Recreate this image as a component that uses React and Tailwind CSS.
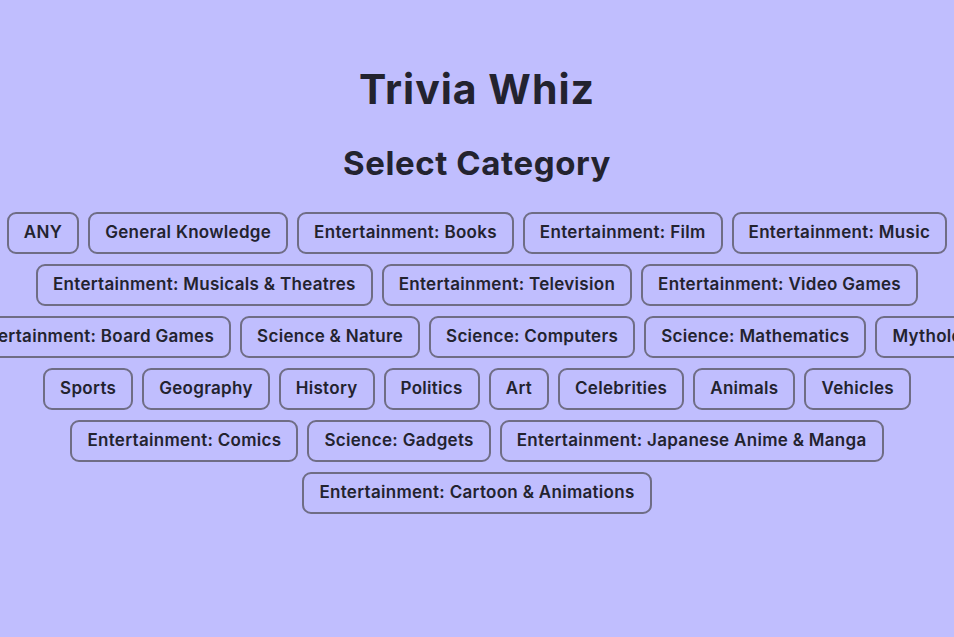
const categories = [
  "ANY",
  "General Knowledge",
  "Entertainment: Books",
  "Entertainment: Film",
  "Entertainment: Music",
  "Entertainment: Musicals & Theatres",
  "Entertainment: Television",
  "Entertainment: Video Games",
  "Entertainment: Board Games",
  "Science & Nature",
  "Science: Computers",
  "Science: Mathematics",
  "Mythology",
  "Sports",
  "Geography",
  "History",
  "Politics",
  "Art",
  "Celebrities",
  "Animals",
  "Vehicles",
  "Entertainment: Comics",
  "Science: Gadgets",
  "Entertainment: Japanese Anime & Manga",
  "Entertainment: Cartoon & Animations",
];

export default function App() {
  return (
    <div className="min-h-[637px] w-full overflow-hidden bg-[#c0befe] text-[#23232f] font-['Inter',sans-serif]">
      <h1 className="pt-[63px] text-center text-[41px] font-bold leading-[52px] tracking-[1px]">
        Trivia Whiz
      </h1>
      <h2 className="mt-[28px] text-center text-[33px] font-bold leading-[40px] tracking-[0.6px]">
        Select Category
      </h2>

      {/* category buttons, wider than the window so some rows spill over */}
      <div className="mt-[29px] flex justify-center">
        <div className="flex w-[1060px] shrink-0 flex-wrap justify-center gap-x-[9px] gap-y-[10px]">
          {categories.map((name) => (
            <button
              key={name}
              className="h-[42px] rounded-[9px] border-2 border-[#6f6d85] px-[15px] text-[17px] font-semibold tracking-[0.3px] text-[#23232f]"
            >
              {name}
            </button>
          ))}
        </div>
      </div>
    </div>
  );
}
